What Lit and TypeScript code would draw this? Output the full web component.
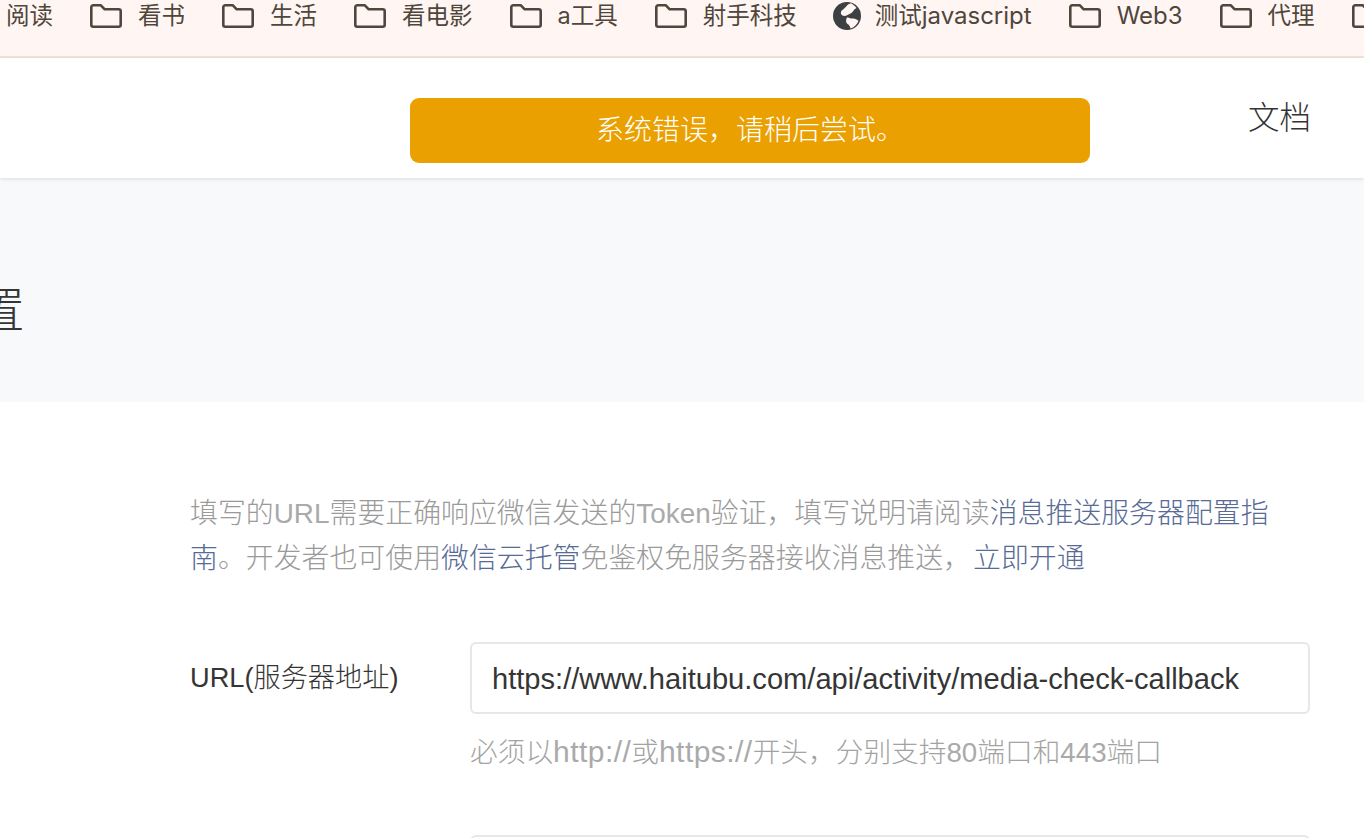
import { LitElement, html, css, svg, unsafeCSS } from "lit";
import { customElement } from "lit/decorators.js";

const FONT = unsafeCSS(`"Liberation Sans", "Noto Sans CJK SC", sans-serif`);

const folder = svg`<svg class="ico" width="32" height="24" viewBox="0 0 32 24" fill="none" stroke="#4f463c" stroke-width="2.6" stroke-linejoin="round"><path d="M1.300 3.300a2 2 0 0 1 2-2h7.600l3.800 4h14a2 2 0 0 1 2 2v13.400a2 2 0 0 1-2 2H3.300a2 2 0 0 1-2-2z"/></svg>`;
const globe = svg`<svg class="ico" width="28" height="28" viewBox="0 0 28 28"><circle cx="14" cy="14" r="14" fill="#3c4043"/><path fill="#fff5f2" d="M18 1.200C14 2 13 5.500 10 7.500 7.500 9 7 12 9.500 13.500c3 1.500 5.500-1 8-2 2.500-1 2.800-4 6-5.500-1.500-2-3.500-3.700-5.500-4.800zM15 15.500c2.500 1.500 5 .5 7.500 1.500 1.300.5 2 1 3 2-1.500 3.500-4.500 6.500-8 7.500-.5-2-1-3.500-3-4.500-2-1.500-1.500-5-.5-6.500z"/></svg>`;

const items: [unknown, boolean?][] = [
  ["看书"], ["生活"], ["看电影"], ["a工具"], ["射手科技"],
  [html`测试<span class="lat">javascript</span>`, true],
  [html`<span class="lat">Web3</span>`], ["代理"], [""],
];

const marks: { x: number; y: number }[] = [];
for (const y of [146, 238, 330, 422, 514, 606, 698, 792]) {
  for (const x of [-75, 357, 789, 1221]) marks.push({ x, y });
}

@customElement("app-root")
export class AppRoot extends LitElement {
  static styles = css`
    :host { display: block; width: 1364px; height: 838px; overflow: hidden; position: relative; background: #fff; font-family: ${FONT}; }
    .bookmarks { height: 56px; box-sizing: content-box; background: #fff5f2; border-bottom: 2px solid #f1e3d6; display: flex; align-items: flex-start; padding: 0 0 0 6px; gap: 37px; white-space: nowrap; overflow: hidden; font-family: Inter, "Noto Sans CJK SC", sans-serif; font-size: 23.500px; color: #4f463c; }
    .bookmarks > span { height: 32px; line-height: 32px; }
    .lat { font-size: 24px; }
    .bm { display: flex; align-items: center; gap: 16px; flex: none; }
    .bm.g { gap: 14px; margin-left: -1px; }
    .ico { flex: none; display: block; }
    .nav { height: 120px; background: #fff; box-shadow: 0 1px 4px rgba(0,0,0,.12); position: relative; display: flex; justify-content: flex-end; padding: 42px 53px 0 0; box-sizing: border-box; font-size: 31.500px; line-height: 36px; color: #333; font-weight: 300; }
    .toast { position: absolute; left: 410px; top: 40px; width: 680px; height: 65px; border-radius: 9px; background: #eaa000; color: #fff; font-size: 28px; font-weight: 300; line-height: 66px; text-align: center; }
    .band { height: 224px; box-sizing: border-box; padding-top: 42px; background: #f8f9fb; display: flex; align-items: center; }
    .band h1 { margin: 0 0 0 -23px; font-weight: 300; font-size: 47.500px; line-height: 60px; color: #353535; }
    .main { padding: 89px 54px 0 190px; }
    .intro { margin: 0; font-size: 27.900px; line-height: 45px; color: #9a9a9a; font-weight: 300; }
    .intro a { color: #576b95; text-decoration: none; }
    .intro a.open { margin-left: 2px; }
    .soft { color: #aaa; }
    .row { display: flex; margin-top: 61px; }
    .label { width: 280px; flex: none; font-size: 27.200px; line-height: 72px; color: #353535; font-weight: 300; }
    .field { flex: 1; }
    .input { height: 72px; box-sizing: border-box; border: 2px solid #e7e7eb; border-radius: 6px; padding: 0 20px; font-size: 29.100px; line-height: 70px; color: #353535; white-space: nowrap; }
    .hint { font-size: 27.700px; line-height: 40px; margin-top: 18px; color: #a3a3a3; font-weight: 300; }
    .hint .wide { font-size: 30px; letter-spacing: .45px; }
    .input.next { margin-top: 62px; }
    .marks { position: absolute; inset: 0; pointer-events: none; font-family: "Liberation Sans", sans-serif; font-size: 28px; line-height: 30px; color: rgba(0,0,0,.018); white-space: nowrap; }
    .marks span { position: absolute; }
  `;

  render() {
    return html`
      <div class="bookmarks">
        <span>阅读</span>
        ${items.map(([t, g]) => html`<span class="bm ${g ? "g" : ""}">${g ? globe : folder}${t ? html`<span>${t}</span>` : ""}</span>`)}
      </div>
      <div class="nav">文档<div class="toast">系统错误，请稍后尝试。</div></div>
      <div class="band"><h1>置</h1></div>
      <div class="main">
        <p class="intro">填写的<span class="soft">URL</span>需要正确响应微信发送的<span class="soft">Token</span>验证，填写说明请阅读<a>消息推送服务器配置指南</a>。开发者也可使用<a>微信云托管</a>免鉴权免服务器接收消息推送，<a class="open">立即开通</a></p>
        <div class="row">
          <div class="label">URL(服务器地址)</div>
          <div class="field">
            <div class="input">https://www.haitubu.com/api/activity/media-check-callback</div>
            <div class="hint">必须以<span class="wide soft">http://</span>或<span class="wide soft">https://</span>开头，分别支持<span class="soft">80</span>端口和<span class="soft">443</span>端口</div>
            <div class="input next"></div>
          </div>
        </div>
      </div>
      <div class="marks">${marks.map((m) => html`<span style="left:${m.x}px;top:${m.y - 15}px">HLWykLJUJAw</span>`)}</div>
    `;
  }
}
